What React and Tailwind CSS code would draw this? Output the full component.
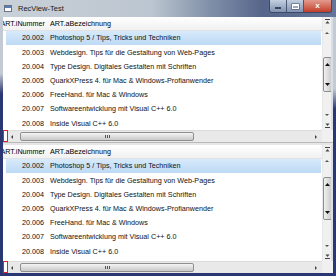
import React from 'react';

const rows = [
  ['20.002', 'Photoshop 5 / Tips, Tricks und Techniken'],
  ['20.003', 'Webdesign. Tips für die Gestaltung von Web-Pages'],
  ['20.004', 'Type Design. Digitales Gestalten mit Schriften'],
  ['20.005', 'QuarkXPress 4. für Mac & Windows-Profianwender'],
  ['20.006', 'FreeHand. für Mac & Windows'],
  ['20.007', 'Softwareentwicklung mit Visual C++ 6.0'],
  ['20.008', 'Inside Visual C++ 6.0'],
  ['20.009', 'Windows-Programmierung mit Visual Basic'],
];

const Arrow = ({ dir, w = 5, h = 3, color = '#3a3a3a' }) => {
  const d = {
    up: `M0 ${h} L${w / 2} 0 L${w} ${h}Z`,
    down: `M0 0 L${w / 2} ${h} L${w} 0Z`,
    left: `M${w} 0 L0 ${h / 2} L${w} ${h}Z`,
    right: `M0 0 L${w} ${h / 2} L0 ${h}Z`,
  }[dir];
  return (
    <svg width={w} height={h} viewBox={`0 0 ${w} ${h}`} className="block">
      <path d={d} fill={color} />
    </svg>
  );
};

const First = () => (
  <svg width="5" height="5" viewBox="0 0 5 5" className="block">
    <rect x="0" y="0" width="5" height="1" fill="#444" />
    <path d="M0.5 4.5 L2.5 2 L4.5 4.5Z" fill="#444" />
  </svg>
);

const Last = () => (
  <svg width="5" height="5" viewBox="0 0 5 5" className="block">
    <path d="M0.5 0.5 L2.5 3 L4.5 0.5Z" fill="#444" />
    <rect x="0" y="4" width="5" height="1" fill="#444" />
  </svg>
);

const VScroll = ({ thumbClass }) => (
  <div className="w-[11px] flex bg-[#f0f0f0]">
    <div className="w-[9px] flex flex-col items-center border-l border-[#e8e8e8]">
      <div className="mt-[2px]"><First /></div>
      <div className="mt-[8px]"><Arrow dir="up" w={4} h={2} color="#555" /></div>
      <div className={`w-[9px] rounded-[2px] border border-[#8e8e8e] bg-gradient-to-r from-[#f0f0f0] to-[#cdcdcd] flex flex-col items-center justify-between py-[5px] ${thumbClass}`}>
        <Arrow dir="up" w={5} h={3} color="#111" />
        <Arrow dir="down" w={5} h={3} color="#111" />
      </div>
      <div className="flex-1" />
      <Arrow dir="down" w={4} h={2} color="#555" />
      <div className="mt-[7px] mb-[2px]"><Last /></div>
    </div>
    <div className="flex-1 bg-[#d9dfe7]" />
  </div>
);

const HScroll = () => (
  <div className="h-[12px] shrink-0 flex bg-white">
    <div className="w-[5px] h-[12px] border border-[#e02424] bg-white" />
    <div className="w-[314px] flex items-center bg-[#e9e9e9] border-t border-[#dcdcdc]">
      <div className="ml-[3px]"><Arrow dir="left" w={2} h={4} color="#444" /></div>
      <div className="ml-[7px] w-[174px] h-[9px] rounded-[2px] border border-[#8f8f8f] bg-gradient-to-b from-[#f4f4f4] to-[#c9c9c9] flex items-center justify-center gap-[1px]">
        <div className="w-[1px] h-[3px] bg-[#555]" />
        <div className="w-[1px] h-[3px] bg-[#555]" />
        <div className="w-[1px] h-[3px] bg-[#555]" />
      </div>
      <div className="flex-1" />
      <div className="mr-[5px]"><Arrow dir="right" w={2} h={4} color="#444" /></div>
    </div>
    <div className="flex-1 bg-[#f0f0f0]" />
  </div>
);

const Grid = ({ heightClass, thumbClass }) => (
  <div className={`flex flex-col ${heightClass}`}>
    <div className="flex flex-1 min-h-0">
      <div className="flex-1 flex flex-col min-w-0 overflow-hidden">
        <div className="h-[14px] shrink-0 flex items-center bg-gradient-to-b from-white to-[#f1f1f1] border-b border-[#e2e2e2] text-black">
          <div className="w-[44px] shrink-0 flex justify-end overflow-hidden pr-[2px] whitespace-nowrap">ART.iNummer</div>
          <div className="pl-[3px] whitespace-nowrap">ART.aBezeichnung</div>
        </div>
        <div className="flex-1 min-h-0 overflow-hidden">
          {rows.map(([nr, text], i) => (
            <div
              key={nr}
              className={`h-[14.2px] ml-[3px] mr-[1px] flex items-center whitespace-nowrap text-[#111] ${i === 0 ? 'bg-gradient-to-b from-[#d8eafb] to-[#bcd9f4]' : ''}`}
            >
              <div className="w-[41px] shrink-0 text-right pr-[3px]">{nr}</div>
              <div className="pl-[3px]">{text}</div>
            </div>
          ))}
        </div>
      </div>
      <VScroll thumbClass={thumbClass} />
    </div>
    <HScroll />
  </div>
);

export default function App() {
  return (
    <div className="w-[336px] h-[276px] overflow-hidden flex flex-col bg-[#2b3772] font-['Liberation_Sans',Arial,sans-serif] text-[7.2px] leading-none">
      <div className="h-[17px] shrink-0 flex items-start bg-[linear-gradient(to_right,#c8d0d8_0%,#bcc6d0_45%,#8291aa_62%,#56668a_78%,#65759a_100%)]">
        <div className="mt-[5px] ml-[4px] w-[8px] h-[7px] border border-[#6a7486] bg-white flex flex-col">
          <div className="h-[2px] bg-[#5a7fb8]" />
        </div>
        <div className="ml-[6px] mt-[5px] text-[7.5px] text-[#1a1a1a]">RecView-Test</div>
        <div className="flex-1" />
        <div className="flex mr-[4px] h-[13px] rounded-b-[3px] border border-t-0 border-[#3d4a66] overflow-hidden">
          <div className="w-[17px] flex items-center justify-center bg-gradient-to-b from-[#c4d0e0] to-[#8193b2] border-r border-[#4b5873]">
            <div className="w-[6px] h-[2px] bg-white mt-[4px] border border-[#3a4660]" />
          </div>
          <div className="w-[17px] flex items-center justify-center bg-gradient-to-b from-[#c4d0e0] to-[#8193b2] border-r border-[#4b5873]">
            <div className="w-[7px] h-[5px] border-[1.5px] border-white border-t-2 shadow-[0_0_0_0.5px_#3a4660]" />
          </div>
          <div className="w-[27px] flex items-center justify-center bg-gradient-to-b from-[#e29a8e] to-[#c23a28] text-white text-[8px] font-bold">
            x
          </div>
        </div>
      </div>
      <div className="flex flex-1 min-h-0">
        <div className="w-[3px] bg-[linear-gradient(to_bottom,#c4cad3_0%,#c4cad3_22%,#2b3772_30%,#2b3772_100%)]" />
        <div className="w-[330px] flex flex-col bg-white">
          <Grid heightClass="h-[125px]" thumbClass="mt-[23px] h-[35px]" />
          <div className="h-[3px] bg-[#e6e6e6] border-t border-[#b9b9b9]" />
          <Grid heightClass="h-[128px]" thumbClass="mt-[15px] h-[43px]" />
        </div>
        <div className="w-[3px] bg-[linear-gradient(to_bottom,#c4cad3_0%,#c4cad3_28%,#2b3772_36%,#2b3772_100%)]" />
      </div>
      <div className="h-[3px] shrink-0 bg-[#2b3772]" />
    </div>
  );
}
